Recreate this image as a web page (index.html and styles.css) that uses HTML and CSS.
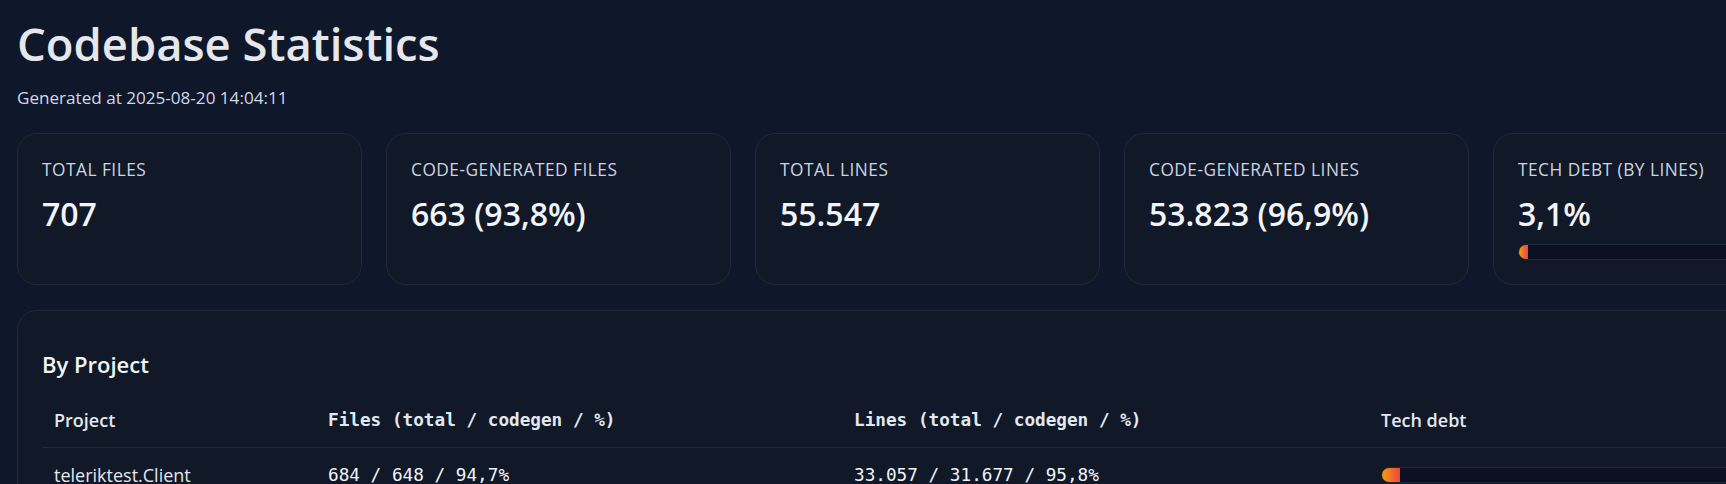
FILE: index.html
```html
<!DOCTYPE html>
<html lang="en">
<head>
<meta charset="utf-8">
<title>Codebase Statistics</title>
<link rel="stylesheet" href="styles.css">
</head>
<body>
<div class="page">
  <h1 class="title">Codebase Statistics</h1>
  <p class="subtitle">Generated at 2025-08-20 14:04:11</p>

  <div class="cards">
    <div class="card">
      <div class="card-label">TOTAL FILES</div>
      <div class="card-value">707</div>
    </div>
    <div class="card">
      <div class="card-label">CODE-GENERATED FILES</div>
      <div class="card-value">663 (93,8%)</div>
    </div>
    <div class="card">
      <div class="card-label">TOTAL LINES</div>
      <div class="card-value">55.547</div>
    </div>
    <div class="card">
      <div class="card-label">CODE-GENERATED LINES</div>
      <div class="card-value">53.823 (96,9%)</div>
    </div>
    <div class="card">
      <div class="card-label">TECH DEBT (BY LINES)</div>
      <div class="card-value">3,1%</div>
      <div class="bar card-bar"><div class="bar-fill" style="width: 3.1%"></div></div>
    </div>
  </div>

  <section class="panel">
    <h2 class="panel-title">By Project</h2>
    <table class="table">
      <colgroup>
        <col class="col-project">
        <col class="col-files">
        <col class="col-lines">
        <col class="col-debt">
      </colgroup>
      <thead>
        <tr>
          <th>Project</th>
          <th class="mono">Files (total / codegen / %)</th>
          <th class="mono">Lines (total / codegen / %)</th>
          <th>Tech debt</th>
        </tr>
      </thead>
      <tbody>
        <tr>
          <td>teleriktest.Client</td>
          <td class="mono">684 / 648 / 94,7%</td>
          <td class="mono">33.057 / 31.677 / 95,8%</td>
          <td><div class="bar"><div class="bar-fill" style="width: 4.2%"></div></div></td>
        </tr>
      </tbody>
    </table>
  </section>
</div>
</body>
</html>
```

FILE: styles.css
```css
html, body {
  margin: 0;
  padding: 0;
  overflow: hidden;
  background: #0f172a;
}

body {
  font-family: "Open Sans", "Noto Sans", sans-serif;
  color: #e5e7eb;
}

.page {
  width: 1821px;
  padding: 15px 17px 40px;
}

.title {
  margin: 0;
  font-size: 45.4px;
  line-height: 56px;
  font-weight: 600;
  color: #e5e7eb;
}

.subtitle {
  margin: 16px 0 0;
  font-size: 17.1px;
  line-height: 22px;
  color: #d1d9e6;
}

.cards {
  margin-top: 24px;
  display: grid;
  grid-template-columns: repeat(5, 345px);
  gap: 24px;
}

.card {
  background: #111827;
  border: 1px solid #1f2937;
  border-radius: 20px;
  padding: 24px;
  display: flex;
  flex-direction: column;
}

.card-label {
  font-size: 17.3px;
  line-height: 24px;
  letter-spacing: 0.5px;
  color: #cbd5e1;
}

.card-value {
  margin-top: 12px;
  font-size: 32px;
  line-height: 40px;
  font-weight: 600;
  color: #f1f5f9;
}

.bar {
  height: 16px;
  box-sizing: border-box;
  background: #0b1120;
  border: 1px solid #1e293b;
  border-radius: 8px;
  overflow: hidden;
  display: flex;
}

.card-bar {
  margin-top: 10px;
}

.bar-fill {
  height: 100%;
  background: linear-gradient(90deg, #f59e0b, #ef4444);
}

.panel {
  margin-top: 25px;
  background: #111827;
  border: 1px solid #1f2937;
  border-radius: 20px;
  padding: 24px;
}

.panel-title {
  margin: 14px 0 0;
  font-size: 22px;
  line-height: 30px;
  font-weight: 600;
  color: #f1f5f9;
}

.table {
  margin-top: 14px;
  width: 100%;
  table-layout: fixed;
  border-collapse: collapse;
}

.col-project { width: 274px; }
.col-files { width: 526px; }
.col-lines { width: 527px; }

.table th,
.table td {
  padding: 14px 12px;
  font-size: 18px;
  line-height: 26px;
  text-align: left;
  border-bottom: 1px solid #1f2937;
  white-space: nowrap;
}

.table th {
  font-weight: 600;
  color: #e2e8f0;
}

.table td {
  font-weight: 400;
  color: #e5e7eb;
}

.table .mono {
  font-family: "DejaVu Sans Mono", "Liberation Mono", monospace;
  font-size: 17.7px;
}

.table th.mono {
  font-weight: 700;
}

.table td.mono {
  color: #f1f5f9;
}
```
